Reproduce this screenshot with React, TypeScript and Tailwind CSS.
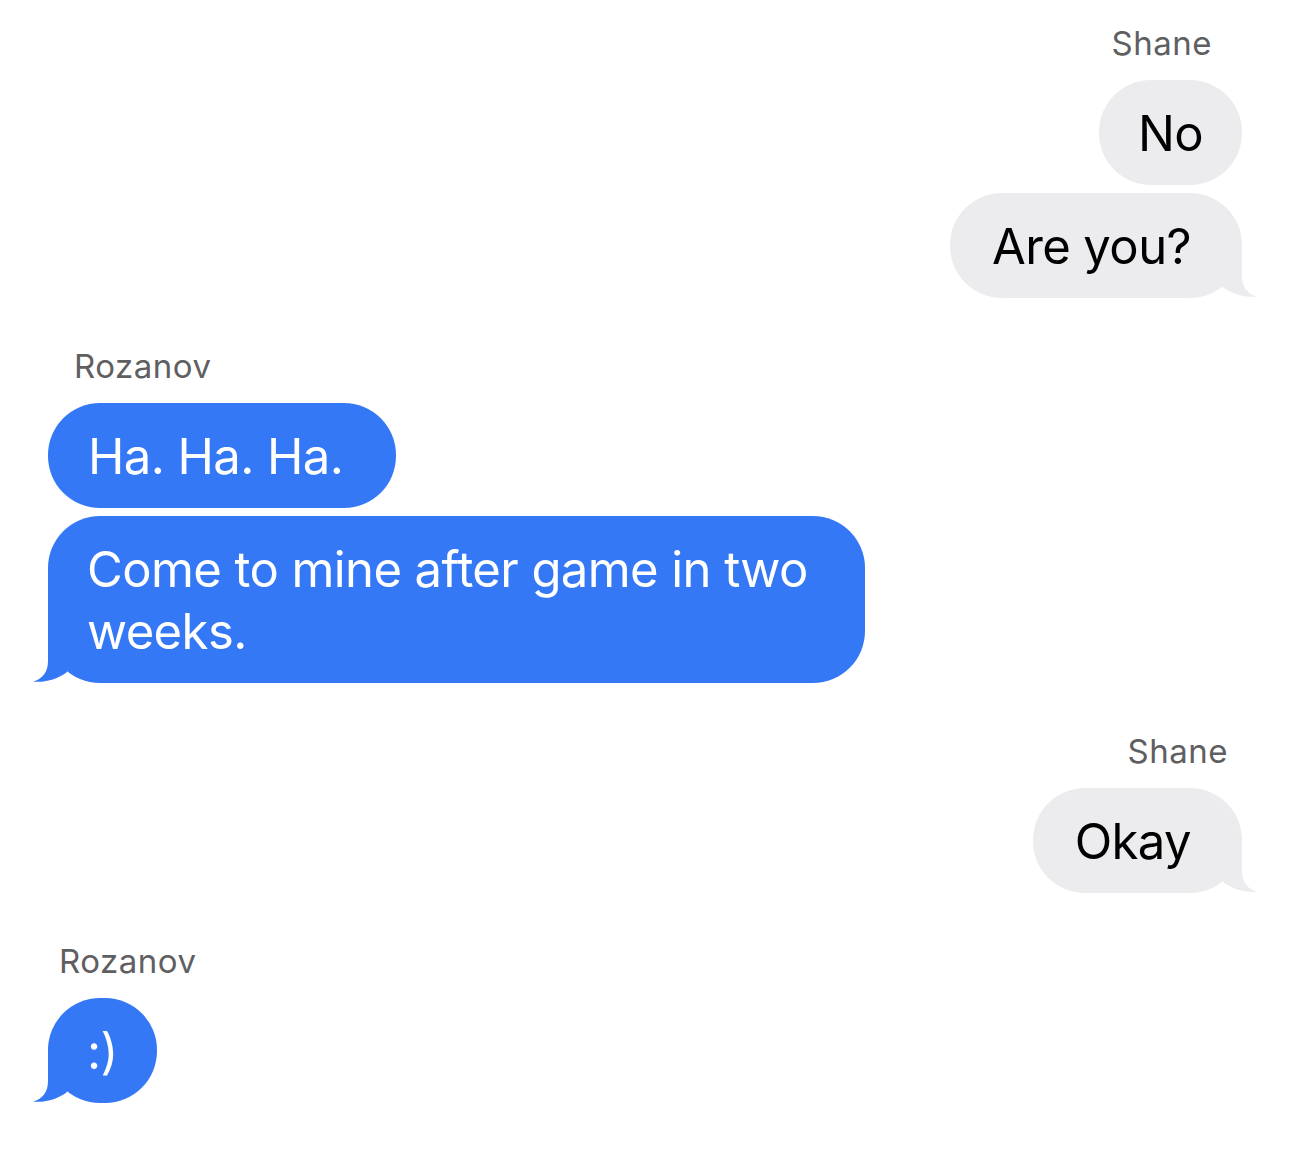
import React from 'react'

type Side = 'in' | 'out'

type Message = { text: string; pad: string }

type Group = {
  side: Side
  name: string
  nameClass: string
  messages: Message[]
}

const groups: Group[] = [
  {
    side: 'out',
    name: 'Shane',
    nameClass: 'mr-[30px]',
    messages: [
      { text: 'No', pad: 'px-[39px]' },
      { text: 'Are you?', pad: 'pl-[42px] pr-[51px]' },
    ],
  },
  {
    side: 'in',
    name: 'Rozanov',
    nameClass: 'ml-[26px]',
    messages: [
      { text: 'Ha. Ha. Ha.', pad: 'pl-[40px] pr-[53px]' },
      { text: 'Come to mine after game in two weeks.', pad: 'px-[39px]' },
    ],
  },
  {
    side: 'out',
    name: 'Shane',
    nameClass: 'mr-[14px]',
    messages: [{ text: 'Okay', pad: 'pl-[42px] pr-[51px]' }],
  },
  {
    side: 'in',
    name: 'Rozanov',
    nameClass: 'ml-[11px]',
    messages: [{ text: ':)', pad: 'px-[39px]' }],
  },
]

function Tail({ side }: { side: Side }) {
  const color = side === 'in' ? '#3478F6' : '#ECECEF'
  return (
    <svg
      className={`absolute bottom-0 w-[50px] h-[56px] ${
        side === 'in' ? 'left-[-15px]' : 'right-[-15px] -scale-x-100'
      }`}
      viewBox="0 0 50 56"
      aria-hidden="true"
    >
      <path d="M15 0 L15 34 C15 46 9 52 0 54.5 C12 56 25 52 34 45 L34 0 Z" fill={color} />
    </svg>
  )
}

function Bubble({ side, msg, tail }: { side: Side; msg: Message; tail: boolean }) {
  return (
    <div
      className={`relative max-w-[817px] rounded-[52px] pt-[23px] pb-[20px] text-[49px] leading-[62px] tracking-[-0.012em] ${
        msg.pad
      } ${side === 'in' ? 'bg-[#3478F6] text-white' : 'bg-[#ECECEF] text-black'}`}
    >
      {tail && <Tail side={side} />}
      <span className="relative">{msg.text}</span>
    </div>
  )
}

export default function App() {
  return (
    <div
      className="min-h-screen bg-white px-12 pt-[23px] pb-[58px]"
      style={{ fontFamily: 'Inter, "Noto Sans", sans-serif' }}
    >
      <div className="flex flex-col">
        {groups.map((g, gi) => (
          <div
            key={gi}
            className={`flex flex-col ${g.side === 'out' ? 'items-end' : 'items-start'} ${
              gi > 0 ? 'mt-[48px]' : ''
            }`}
          >
            <p
              className={`text-[33px] leading-[40px] tracking-[0.015em] text-[#5f5f62] mb-[17px] ${g.nameClass}`}
            >
              {g.name}
            </p>
            <div className={`flex flex-col gap-2 ${g.side === 'out' ? 'items-end' : 'items-start'}`}>
              {g.messages.map((m, mi) => (
                <Bubble key={mi} side={g.side} msg={m} tail={mi === g.messages.length - 1} />
              ))}
            </div>
          </div>
        ))}
      </div>
    </div>
  )
}
